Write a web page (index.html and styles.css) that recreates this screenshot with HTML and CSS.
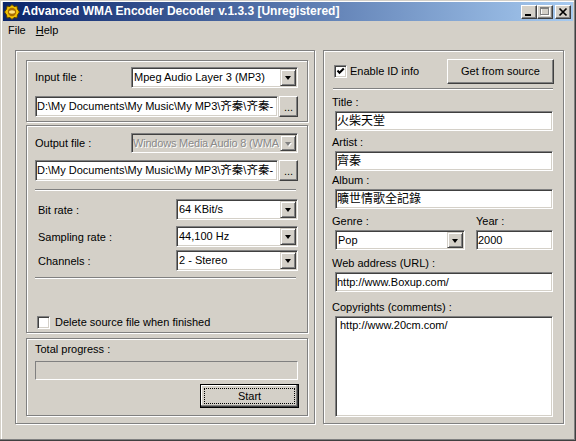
FILE: index.html
```html
<!DOCTYPE html>
<html>
<head>
<meta charset="utf-8">
<title>Advanced WMA Encoder Decoder</title>
<link rel="stylesheet" href="styles.css">
</head>
<body>
<div class="window">
  <div class="titlebar">
    <svg class="app-icon" width="16" height="16" viewBox="0 0 16 16">
      <polygon points="8,0.5 10,2.5 13,2 13.5,5 15.5,8 13.5,11 13,14 10,13.5 8,15.5 6,13.5 3,14 2.5,11 0.5,8 2.5,5 3,2 6,2.5" fill="#f2c200" stroke="#5a4000" stroke-width="1"/>
      <circle cx="8" cy="8" r="4.2" fill="#a86c00"/>
      <ellipse cx="8" cy="8" rx="3" ry="1.7" fill="#ffe27a"/>
    </svg>
    <span class="title-text">Advanced WMA Encoder Decoder v.1.3.3 [Unregistered]</span>
    <div class="caption-btns">
      <span class="cbtn"><svg width="14" height="12" viewBox="0 0 14 12"><rect x="3" y="8" width="6" height="2" fill="#000"/></svg></span>
      <span class="cbtn"><svg width="14" height="12" viewBox="0 0 14 12">
        <rect x="3.5" y="2.5" width="8" height="7" fill="none" stroke="#fff"/>
        <rect x="3" y="2" width="9" height="1" fill="#fff"/>
        <rect x="2.5" y="1.5" width="8" height="7" fill="none" stroke="#808080"/>
        <rect x="2" y="1" width="9" height="2" fill="#808080"/>
      </svg></span>
      <span class="cbtn cbtn-close"><svg width="14" height="12" viewBox="0 0 14 12"><path d="M3.5 2.5 L10.5 9.5 M10.5 2.5 L3.5 9.5" stroke="#000" stroke-width="1.7"/></svg></span>
    </div>
  </div>

  <div class="menubar">
    <span class="menu">File</span>
    <span class="menu"><u>H</u>elp</span>
  </div>

  <div class="client">
    <div class="panel panel-left">
      <div class="group group-input">
        <div class="row row-between">
          <span>Input file :</span>
          <div class="combo combo-format"><span class="value">Mpeg Audio Layer 3 (MP3)</span><span class="drop"><i class="arrow"></i></span></div>
        </div>
        <div class="row path-row">
          <div class="field field-path">D:\My Documents\My Music\My MP3\<span class="cjk">齐秦</span>\<span class="cjk">齐秦</span> -</div>
          <span class="btn btn-dots">...</span>
        </div>
      </div>

      <div class="group group-output">
        <div class="row row-between out-row">
          <span>Output file :</span>
          <div class="combo combo-format combo-disabled"><span class="value">Windows Media Audio 8 (WMA</span><span class="drop"><i class="arrow"></i></span></div>
        </div>
        <div class="row path-row path-row-out">
          <div class="field field-path">D:\My Documents\My Music\My MP3\<span class="cjk">齐秦</span>\<span class="cjk">齐秦</span> -</div>
          <span class="btn btn-dots">...</span>
        </div>
        <div class="sep sep-out1"></div>
        <div class="row row-between opt-row opt-bitrate">
          <span class="opt-label">Bit rate :</span>
          <div class="combo combo-opt"><span class="value">64 KBit/s</span><span class="drop"><i class="arrow"></i></span></div>
        </div>
        <div class="row row-between opt-row opt-sampling">
          <span class="opt-label">Sampling rate :</span>
          <div class="combo combo-opt"><span class="value">44,100 Hz</span><span class="drop"><i class="arrow"></i></span></div>
        </div>
        <div class="row row-between opt-row opt-channels">
          <span class="opt-label">Channels :</span>
          <div class="combo combo-opt"><span class="value">2 - Stereo</span><span class="drop"><i class="arrow"></i></span></div>
        </div>
        <div class="sep sep-out2"></div>
        <div class="row delete-row">
          <span class="check"></span>
          <span class="check-label">Delete source file when finished</span>
        </div>
      </div>

      <div class="group group-progress">
        <div class="progress-label">Total progress :</div>
        <div class="progress"></div>
        <div class="row start-row">
          <span class="btn-start"><span class="focus">Start</span></span>
        </div>
      </div>
    </div>

    <div class="panel panel-right">
      <div class="row id-top">
        <span class="check check-id"><svg width="9" height="9" viewBox="0 0 9 9"><path d="M1.5 3.5 L3.5 5.8 L7.8 1.5" fill="none" stroke="#000" stroke-width="2"/></svg></span>
        <span class="check-label check-label-id">Enable ID info</span>
        <span class="btn btn-get">Get from source</span>
      </div>
      <div class="sep sep-id"></div>

      <div class="frow f-title">
        <div class="flabel">Title :</div>
        <div class="field field-tag"><span class="cjk">火柴天堂</span></div>
      </div>
      <div class="frow f-artist">
        <div class="flabel">Artist :</div>
        <div class="field field-tag"><span class="cjk">齊秦</span></div>
      </div>
      <div class="frow f-album">
        <div class="flabel">Album :</div>
        <div class="field field-tag"><span class="cjk">曠世情歌全記錄</span></div>
      </div>
      <div class="frow f-genre split">
        <div class="col-genre">
          <div class="flabel">Genre :</div>
          <div class="combo combo-genre"><span class="value">Pop</span><span class="drop"><i class="arrow"></i></span></div>
        </div>
        <div class="col-year">
          <div class="flabel">Year :</div>
          <div class="field field-year">2000</div>
        </div>
      </div>
      <div class="frow f-web">
        <div class="flabel">Web address (URL) :</div>
        <div class="field field-tag">http://www.Boxup.com/</div>
      </div>
      <div class="frow f-copy">
        <div class="flabel">Copyrights (comments) :</div>
        <div class="memo">http://www.20cm.com/</div>
      </div>
    </div>
  </div>
</div>
</body>
</html>
```

FILE: styles.css
```css
* { box-sizing: border-box; }

html, body { margin: 0; padding: 0; }

body {
  width: 576px;
  height: 441px;
  overflow: hidden;
  background: #d4d0c8;
  font: 11px/13px "Liberation Sans", "Noto Sans CJK SC", sans-serif;
  color: #000;
}

.window {
  width: 576px;
  height: 441px;
  padding: 3px;
  background: #d4d0c8;
  box-shadow: inset -1px -1px #404040, inset -2px -2px #808080,
              inset 1px 1px #d4d0c8, inset 2px 2px #fff;
}

/* title bar */
.titlebar {
  display: flex;
  align-items: center;
  height: 19px;
  margin-top: -1px;
  padding: 0 2px 0 1px;
  background: linear-gradient(to right, #0a246a, #a6caf0);
  color: #fff;
  font-weight: bold;
  font-size: 12px;
}
.app-icon { flex: none; margin-right: 2px; }
.title-text { flex: 1; white-space: nowrap; overflow: hidden; }
.caption-btns { display: flex; flex: none; }
.cbtn {
  display: block;
  width: 16px;
  height: 14px;
  background: #d4d0c8;
  border: 1px solid;
  border-color: #fff #404040 #404040 #fff;
  box-shadow: inset -1px -1px #808080;
}
.cbtn svg { display: block; }
.cbtn-close { margin-left: 2px; }

/* menu */
.menubar {
  display: flex;
  align-items: center;
  height: 19px;
}
.menu { padding: 0 5px; }
.menu u { text-decoration: underline; }

/* client */
.client {
  display: flex;
  gap: 8px;
  padding: 10px 0 0 12px;
}

.panel, .group {
  border: 1px solid #808080;
  box-shadow: inset 1px 1px #fff, 1px 1px #fff;
}
.panel { height: 374px; }
.panel-left { width: 300px; padding: 9px 0 0 10px; }
.panel-right { width: 241px; padding: 8px 9px 0 8px; }

.group { width: 282px; padding: 0 9px 0 8px; }
.group-input { height: 62px; padding-top: 6px; }
.group-output { height: 208px; margin-top: 3px; padding-top: 7px; }
.group-progress { height: 78px; margin-top: 5px; padding-top: 4px; }

.row { display: flex; align-items: center; }
.row-between { justify-content: space-between; }

/* sunken controls */
.combo, .field, .memo, .check {
  border: 1px solid;
  border-color: #808080 #fff #fff #808080;
  padding: 1px;
  background: #fff;
  box-shadow: inset 1px 1px #404040, inset -1px -1px #d4d0c8;
}

.combo {
  display: flex;
  align-items: stretch;
  height: 21px;
}
.combo .value {
  flex: 1;
  display: flex;
  align-items: center;
  padding-left: 1px;
  white-space: nowrap;
  overflow: hidden;
}
.drop {
  flex: none;
  width: 16px;
  display: flex;
  align-items: center;
  justify-content: center;
  background: #d4d0c8;
  border: 1px solid;
  border-color: #d4d0c8 #404040 #404040 #d4d0c8;
  box-shadow: inset 1px 1px #fff, inset -1px -1px #808080;
}
.arrow {
  display: block;
  width: 1px;
  height: 0;
  border-left: 3px solid transparent;
  border-right: 3px solid transparent;
  border-top: 4px solid #000;
  margin-top: 1px;
}
.combo-disabled { background: #d4d0c8; }
.combo-disabled .value {
  color: #8a8a8a;
  text-shadow: 1px 1px #fff;
  letter-spacing: -0.2px;
  padding-left: 0;
}
.combo-disabled .arrow { border-top-color: #808080; filter: drop-shadow(1px 1px 0 #fff); }

.combo-format { width: 167px; }
.out-row .combo { height: 20px; }

.field {
  display: flex;
  align-items: center;
  height: 21px;
  white-space: nowrap;
  overflow: hidden;
}
.cjk {
  display: inline-block;
  height: 13px;
  line-height: 13px;
  font-size: 12px;
}
.field-path .cjk { font-size: 11.5px; }

.path-row { margin-top: 8px; }
.path-row-out { margin-top: 7px; }
.field-path { width: 243px; }

/* raised buttons */
.btn {
  display: flex;
  align-items: center;
  justify-content: center;
  background: #d4d0c8;
  border: 1px solid;
  border-color: #fff #404040 #404040 #fff;
  box-shadow: inset -1px -1px #808080;
}
.btn-dots {
  width: 19px;
  height: 21px;
  margin-left: 1px;
  padding-top: 2px;
}

.sep {
  border-top: 1px solid #808080;
  border-bottom: 1px solid #fff;
}
.sep-out1 { margin-top: 8px; width: 261px; }
.sep-out2 { margin-top: 6px; width: 261px; }

.opt-label { padding-left: 3px; padding-top: 2px; }
.combo-opt { width: 122px; }
.opt-bitrate { margin-top: 8px; }
.opt-sampling { margin-top: 6px; }
.opt-channels { margin-top: 3px; }

.check {
  flex: none;
  width: 13px;
  height: 13px;
  padding: 1px;
}
.check svg { display: block; }
.delete-row { margin-top: 37px; padding-left: 2px; }
.check-label { margin-left: 5px; }

.progress-label { height: 13px; }
.progress {
  margin-top: 5px;
  height: 19px;
  border: 1px solid;
  border-color: #808080 #fff #fff #808080;
}
.start-row { margin-top: 4px; justify-content: flex-end; margin-right: -1px; }
.btn-start {
  display: flex;
  width: 99px;
  height: 24px;
  padding: 3px;
  border: 1px solid #000;
  background: #d4d0c8;
  box-shadow: inset -1px -1px #404040, inset -2px -2px #808080, inset 1px 1px #fff;
}
.focus {
  flex: 1;
  display: flex;
  align-items: center;
  justify-content: center;
  border: 1px dotted #000;
}

/* right panel */
.id-top { height: 25px; }
.check-id { margin-left: 2px; }
.check-label-id { margin-left: 3px; }
.btn-get { margin-left: auto; width: 107px; height: 25px; }
.sep-id { margin: 4px 0 0 1px; width: 220px; }

.flabel { height: 13px; line-height: 13px; white-space: nowrap; }
.frow .field, .frow .combo, .memo { margin-top: 2px; }
.field-tag { width: 218px; height: 20px; margin-left: 3px; }

.f-title { margin-top: 6px; }
.f-artist { margin-top: 5px; }
.f-album { margin-top: 3px; }
.f-genre { margin-top: 6px; }
.f-web { margin-top: 7px; }
.f-copy { margin-top: 9px; }

.split { display: flex; }
.col-genre { width: 144px; }
.combo-genre { width: 130px; height: 20px; margin-left: 3px; }
.col-year { flex: none; }
.field-year { width: 77px; height: 20px; }

.memo {
  width: 218px;
  height: 101px;
  margin-left: 3px;
  padding: 2px 4px;
}
```
